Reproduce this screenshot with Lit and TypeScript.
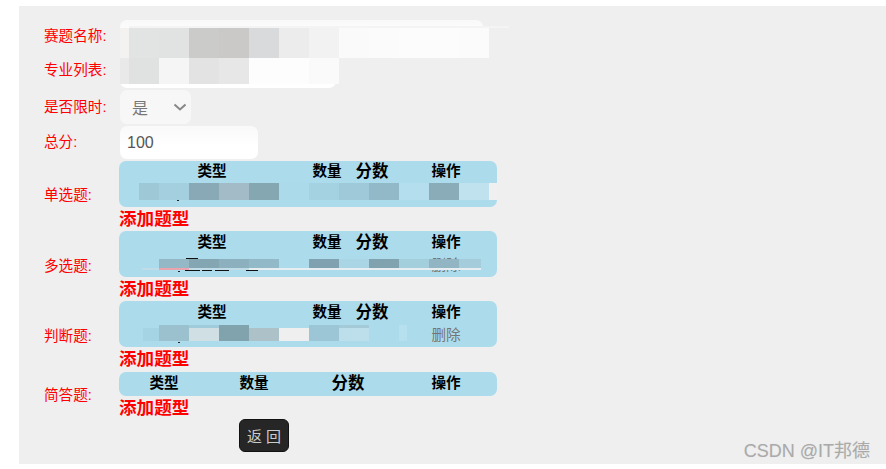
import { LitElement, html, css } from "lit";
import { customElement } from "lit/decorators.js";

type Tile = [number, number, number, number, string];

function strip(startX: number, y: number, h: number, colors: string[], w = 30): Tile[] {
  return colors.map((c, i) => [startX + i * w, y, w, h, c] as Tile);
}

const TILES: Tile[] = [
  // name + list fields
  [129, 26, 380, 2, "#f4f4f4"],
  [120, 28, 9, 30, "#f3f2f0"],
  ...strip(129, 28, 30, ["#e2e3e3", "#e1e2e2", "#cbcbca", "#cac9c7", "#d9dadc", "#ececec", "#f2f2f2", "#fafafa", "#fbfbfb", "#fcfcfc", "#fcfcfc", "#fbfbfb"]),
  [120, 58, 9, 26, "#e9e9e9"],
  ...strip(129, 58, 26, ["#e0e1e1", "#f5f5f5", "#e3e3e3", "#e7e7e7", "#fdfdfd", "#fdfdfd", "#fafafa"]),
  // single-choice row
  [139, 183, 20, 17, "#9fc8d6"],
  ...strip(159, 183, 17, ["#a3cfdf", "#88a9b5", "#a3bbc6", "#84a7b2", "#abdaea", "#a4d2e1", "#9fc9d8", "#92b9c7", "#b4deed", "#8aacb9", "#c0e1ee"]),
  [489, 183, 8, 17, "#f0f0f0"],
  [177, 200, 2, 1, "#222222"],
  // multi-choice row
  [142, 268, 339, 2, "#e7eef1"],
  [142, 268, 17, 2, "#c0dce6"],
  [159, 268, 30, 2, "#eba3ad"],
  [189, 268, 60, 2, "#c0dce6"],
  ...strip(159, 259, 9, ["#94b8c6", "#83a6b2", "#8db0be", "#92b9c7"]),
  ...strip(309, 259, 9, ["#7fa1b0", "#a9d5e4", "#80a3af", "#a3cfdd", "#91b5c3"]),
  [459, 259, 22, 9, "#a5ccdb"],
  [186, 258, 12, 1, "#111111"],
  [185, 270, 15, 1, "#111111"],
  [202, 270, 10, 1, "#111111"],
  [215, 270, 14, 1, "#111111"],
  [246, 270, 12, 1, "#111111"],
  [178, 271, 2, 1, "#222222"],
  // true/false row
  [143, 328, 16, 13, "#a5d4e5"],
  [159, 325, 30, 16, "#9bc0ce"],
  [189, 325, 30, 3, "#a0cbda"],
  [189, 328, 30, 13, "#d0dfe4"],
  [219, 325, 30, 16, "#80a3ae"],
  [249, 328, 30, 13, "#adc2c8"],
  [279, 328, 30, 13, "#efefef"],
  [309, 325, 30, 16, "#9cc5d6"],
  [339, 325, 30, 3, "#a5cad7"],
  [339, 328, 30, 13, "#bcdfeb"],
  [399, 325, 8, 16, "#b6e0ee"],
  [178, 342, 2, 1, "#222222"],
];

@customElement("app-root")
export class AppRoot extends LitElement {
  static styles = css`
    :host {
      display: block;
      position: relative;
      box-sizing: border-box;
      height: 469px;
      padding: 6px 0 5px 19px;
      background: #fff;
      overflow: hidden;
      font-family: "Liberation Sans", "Noto Sans CJK SC", sans-serif;
    }
    .panel {
      height: 100%;
      box-sizing: border-box;
      padding: 14px 0 0 25px;
      background: #efefef;
    }
    .row {
      display: grid;
      grid-template-columns: 76px 1fr;
      align-items: center;
    }
    .label {
      color: #ff0000;
      font-size: 14.6px;
      line-height: 20px;
    }
    .h-name { height: 34px; }
    .h-list { height: 35px; }
    .h-limit { height: 36px; }
    .h-score { height: 35px; }
    .h-name .label, .h-list .label { padding-bottom: 3px; }
    .h-limit .label { padding-bottom: 1px; }
    .h-score .label { padding-bottom: 2px; }
    .field {
      box-sizing: border-box;
      display: block;
      height: 33px;
      padding: 0 7px;
      border: 0;
      border-radius: 7px;
      background: linear-gradient(#f9f9f9, #ffffff 60%);
      color: #555;
      font: 16px "Liberation Sans", "Noto Sans CJK SC", sans-serif;
      outline: none;
    }
    .w-name { width: 363px; height: 34px; }
    .w-list { width: 216px; height: 33px; }
    .w-score { width: 138px; }
    .select {
      width: 71px;
      height: 34px;
      display: flex;
      align-items: center;
      justify-content: space-between;
      box-sizing: border-box;
      padding: 0 5px 0 12px;
      border-radius: 7px;
      background: #f7f7f7;
      color: #777;
      font-size: 16px;
    }
    .select svg { display: block; }
    .block { height: 70.4px; }
    .block.last { height: 48px; }
    .stack { margin-left: -1px; width: 378px; }
    .table {
      height: 46px;
      border-radius: 7px;
      background: #acdcec;
      color: #000;
    }
    .table.short { height: 24px; }
    .tr {
      display: grid;
      align-items: center;
      height: 21px;
      text-align: center;
    }
    .short .tr { height: 23px; }
    .cols-a { grid-template-columns: 186px 44px 46px 102px; }
    .cols-b { grid-template-columns: 90px 90px 98px 98px; }
    .th { font-size: 14.6px; font-weight: 700; line-height: 20px; }
    .th.big { font-size: 16.5px; }
    .td { font-size: 14.6px; color: #757575; line-height: 20px; }
    .tr.body { box-sizing: border-box; height: 25px; padding-top: 1px; }
    .add {
      display: block;
      height: 23px;
      line-height: 24px;
      color: #ff0000;
      font-size: 17.6px;
      font-weight: 700;
    }
    .actions { padding-left: 195px; }
    button {
      box-sizing: border-box;
      display: block;
      width: 50px;
      height: 33px;
      padding: 0;
      border: 1px solid #111;
      border-radius: 6px;
      background: #262626;
      color: #cccccc;
      font: 15px "Liberation Sans", "Noto Sans CJK SC", sans-serif;
    }
    .tile { position: absolute; }
    .mark {
      position: absolute;
      right: 16px;
      top: 441px;
      color: #aaaaaa;
      font-size: 18px;
      line-height: 20px;
      text-shadow: 0 0 1px #ddd;
    }
  `;

  private head(cols = "cols-a") {
    return html`<div class="tr ${cols}">
      <div class="th">类型</div>
      <div class="th">数量</div>
      <div class="th big">分数</div>
      <div class="th">操作</div>
    </div>`;
  }

  private question(label: string, action: string) {
    return html`<div class="row block">
      <div class="label">${label}</div>
      <div class="stack">
        <div class="table">
          ${this.head()}
          <div class="tr body cols-a">
            <div class="td"></div><div class="td"></div><div class="td"></div><div class="td">${action}</div>
          </div>
        </div>
        <a class="add">添加题型</a>
      </div>
    </div>`;
  }

  render() {
    return html`
      <div class="panel">
        <div class="row h-name">
          <div class="label">赛题名称:</div>
          <input class="field w-name" />
        </div>
        <div class="row h-list">
          <div class="label">专业列表:</div>
          <input class="field w-list" />
        </div>
        <div class="row h-limit">
          <div class="label">是否限时:</div>
          <div class="select">
            <span>是</span>
            <svg width="16" height="16" viewBox="0 0 16 16" fill="none" stroke="#888" stroke-width="2">
              <path d="M4.5 5.5 10 10.5 15.5 5.5" />
            </svg>
          </div>
        </div>
        <div class="row h-score">
          <div class="label">总分:</div>
          <input class="field w-score" .value=${"100"} />
        </div>
        ${this.question("单选题:", "")}
        ${this.question("多选题:", "删除")}
        ${this.question("判断题:", "删除")}
        <div class="row block last">
          <div class="label">简答题:</div>
          <div class="stack">
            <div class="table short">${this.head("cols-b")}</div>
            <a class="add">添加题型</a>
          </div>
        </div>
        <div class="actions"><button>返 回</button></div>
      </div>
      ${TILES.map(
        ([x, y, w, h, c]) =>
          html`<div class="tile" style="left:${x}px;top:${y}px;width:${w}px;height:${h}px;background:${c}"></div>`
      )}
      <div class="mark">CSDN @IT邦德</div>
    `;
  }
}
